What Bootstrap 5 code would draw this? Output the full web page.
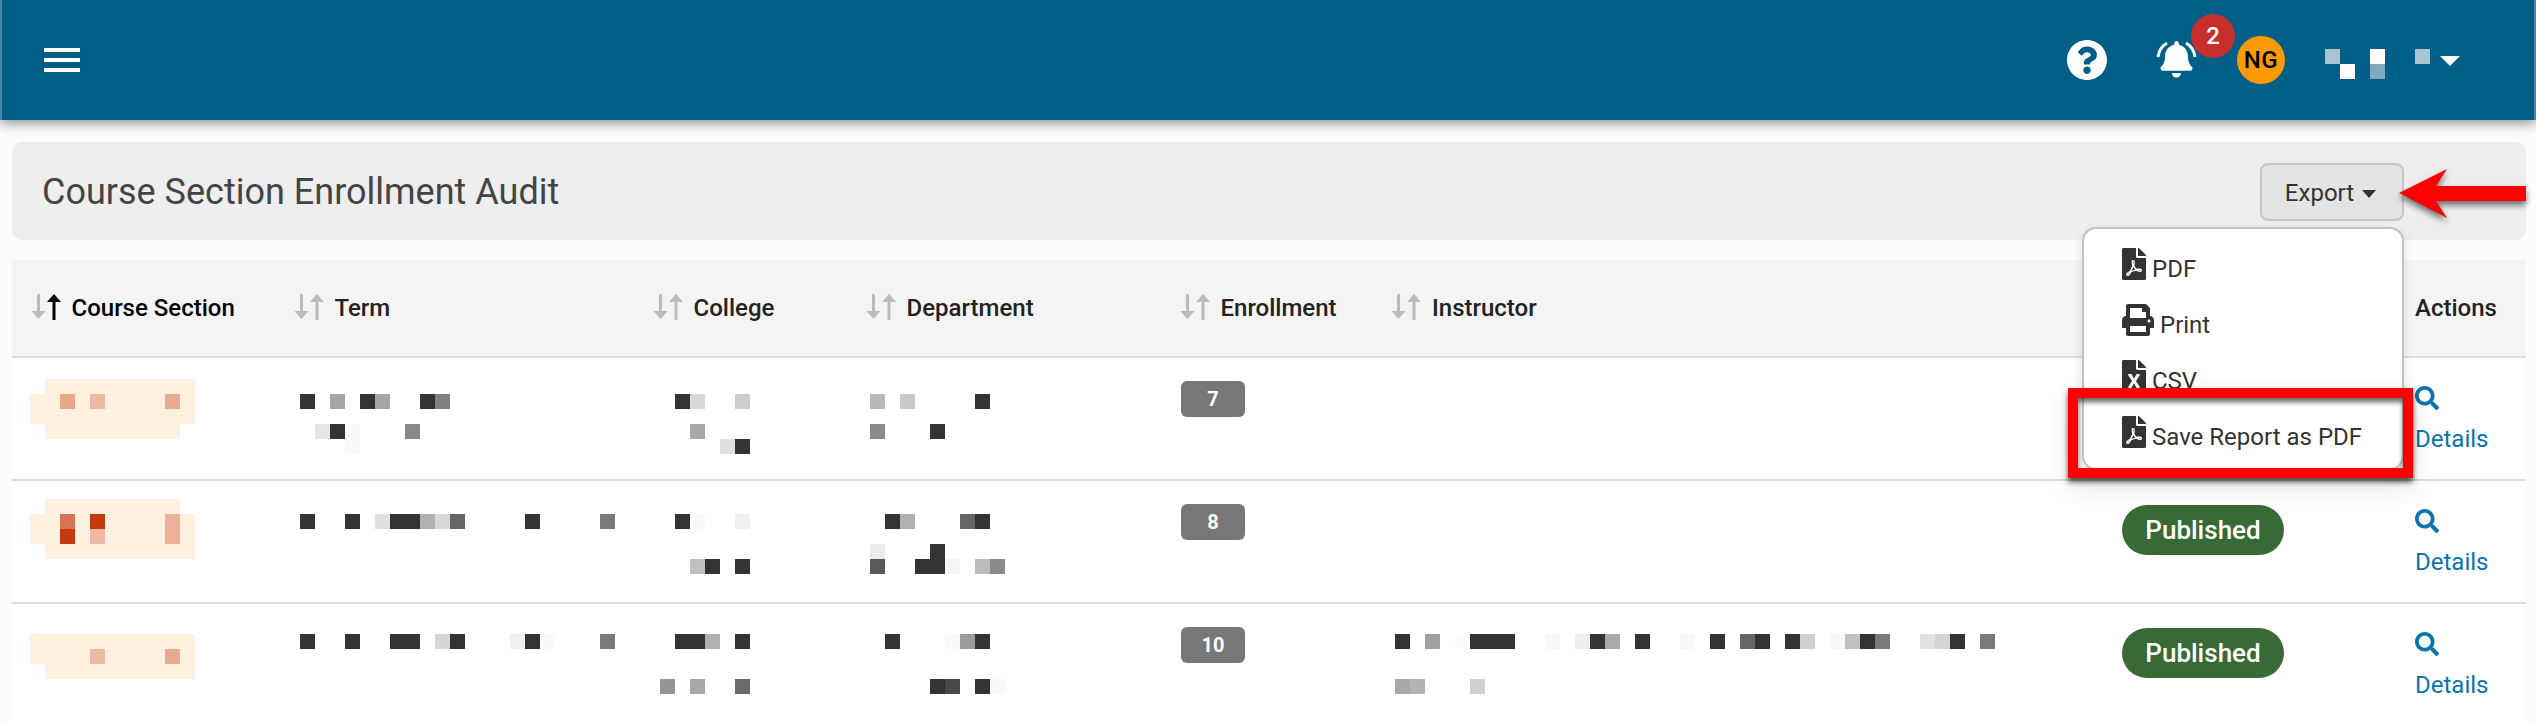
<!DOCTYPE html>
<html lang="en">
<head>
<meta charset="utf-8">
<title>Course Section Enrollment Audit</title>
<link href="https://cdn.jsdelivr.net/npm/bootstrap@5.3.0/dist/css/bootstrap.min.css" rel="stylesheet">
<style>
html,body{height:724px;overflow:hidden}
body{background:#fcfcfc;font-family:Roboto,"Liberation Sans",sans-serif;font-size:24px;color:#333;position:relative}
.topbar{height:120px;background:#005f87;border-left:2px solid #4a89a5;border-right:2px solid #4a89a5;box-shadow:0 3px 12px rgba(0,0,0,.45);padding:0 74px 0 42px}
.burger{width:36px;display:flex;flex-direction:column;gap:6px}
.burger i{display:block;height:4px;background:#fff}
.ic-help{width:40px;height:40px;fill:#fff;margin-left:auto}
.bellbox{position:relative;width:41px;height:40px;margin-left:49px}
.bellbox svg{display:block}
.notif{position:absolute;left:35px;top:-26px;width:44px;height:44px;border-radius:50%;background:#c62f2b;color:#fff;font-weight:500;font-size:24px;line-height:44px;text-align:center}
.avatar{width:48px;height:48px;border-radius:50%;background:#fb9a05;color:#000;font-size:24px;font-weight:500;letter-spacing:.5px;line-height:48px;text-align:center;margin-left:40px}
.usermos{margin-left:40px;margin-top:8px;display:block}
.usercaret{width:0;height:0;border-left:10px solid transparent;border-right:10px solid transparent;border-top:10px solid #fff;margin-left:10px;margin-top:2px}
.wrap{padding:22px 10px 0 12px}
.titlebar{height:98px;background:#eee;border-radius:10px;padding:0 122px 0 30px;margin-bottom:20px}
.titlebar h1{font-size:36px;font-weight:400;color:#444;margin:3px 0 0}
.exportbtn{height:58px;width:144px;padding:2px 3px 0 0;background:#e4e4e4;border:2px solid #c4c4c4;border-radius:8px;color:#333;font-size:24px;margin-top:2px}
.exportbtn:hover,.exportbtn:focus{background:#e4e4e4;border-color:#c4c4c4;color:#333}
.exportbtn::after{border-top-width:8px;border-left-width:7.5px;border-right-width:7.5px;margin-left:8px;vertical-align:3px}
.exportmenu{top:66px;right:0;width:322px;padding:7px 0 8px;border:2px solid #c2c2c2;border-radius:14px;box-shadow:0 4px 10px rgba(0,0,0,.12);font-size:24px}
.exportitem{height:56px;padding:0 0 0 38px;color:#333;gap:6px}
.exportitem svg{fill:#333;height:32px}
.exportitem span{margin-top:9px}
.audit{table-layout:fixed;width:2514px;margin:0;background:#fff;--bs-table-bg:transparent;font-size:24px}
.audit th{height:97px;padding:30px 0 0;background:#f4f4f4;border-bottom:2px solid #ddd;font-weight:500;color:#222;vertical-align:top}
.audit th.now{color:#000}
.audit td{height:123px;padding:0 0 0 18px;border-bottom:2px solid #ddd;vertical-align:top}
.audit tr.last td{height:121px;border-bottom:0}
.r1 .mcell{padding-top:21px}
.r2 .mcell{padding-top:18px}
.r3 .mcell{padding-top:15px}
.mcell svg{display:block}
.audit td.bcell{padding-top:23px}
.audit td.pcell{padding-top:24px;padding-left:19px}
.audit td.acell{padding-top:28px}
.th-a{padding-left:18.5px!important}.th-b{padding-left:11.5px!important}.th-c{padding-left:10.5px!important}
.th-d{padding-left:13.5px!important}.th-e{padding-left:16.5px!important}.th-f{padding-left:14px!important}.th-h{padding-left:18px!important}
.sort{margin-right:11px;margin-top:-3px;flex:none;fill:#bbb}
.sort .on{fill:#000}
.count{display:block;width:64px;height:36px;padding:0;background:#777;border-radius:6px;color:#fff;font-size:20px;font-weight:700;line-height:36px}
.pubpill{display:block;width:162px;height:50px;padding:0;background:#386a37;border-radius:25px;color:#fff;font-size:26px;font-weight:500;line-height:50px}
.detail{color:#0a75ad;text-decoration:none;display:block}
.detail svg{display:block;width:24px;height:24px;fill:#0a75ad}
.detail span{display:block;margin-top:13px;line-height:32px}
.redframe{position:absolute;left:2068px;top:388px;width:345px;height:90px;border:10px solid #f00;box-shadow:0 4px 5px rgba(0,0,0,.65),0 8px 24px rgba(0,0,0,.12),inset 0 4px 5px rgba(0,0,0,.6);z-index:1050}
.redarrow{position:absolute;left:2395px;top:165px;z-index:1050;filter:drop-shadow(0 4px 3px rgba(0,0,0,.55))}
</style>
</head>
<body>
<nav class="topbar d-flex align-items-center">
  <div class="burger"><i></i><i></i><i></i></div>
  <svg class="ic-help" viewBox="8 8 496 496"><path d="M504 256c0 136.997-111.043 248-248 248S8 392.997 8 256C8 119.083 119.043 8 256 8s248 111.083 248 248zM262.655 90c-54.497 0-89.255 22.957-116.549 63.758-3.536 5.286-2.353 12.415 2.715 16.258l34.699 26.31c5.205 3.947 12.621 3.008 16.665-2.122 17.864-22.658 30.113-35.797 57.303-35.797 20.429 0 45.698 13.148 45.698 32.958 0 14.976-12.363 22.667-32.534 33.976C247.128 238.528 216 254.941 216 296v4c0 6.627 5.373 12 12 12h56c6.627 0 12-5.373 12-12v-1.333c0-28.462 83.186-29.647 83.186-106.667 0-58.002-60.165-102-116.531-102zM256 338c-25.365 0-46 20.635-46 46 0 25.364 20.635 46 46 46s46-20.636 46-46c0-25.365-20.635-46-46-46z"/></svg>
  <div class="bellbox">
    <svg width="41" height="40" viewBox="0 0 41 40"><g transform="translate(4.5 1) scale(.0714)" fill="#fff"><path d="M224 512c35.32 0 63.97-28.65 63.97-64H160.03c0 35.35 28.65 64 63.97 64zm215.39-149.71c-19.32-20.76-55.47-51.99-55.47-154.29 0-77.7-54.48-139.9-127.94-155.16V32c0-17.67-14.32-32-31.98-32s-31.98 14.33-31.98 32v20.84C118.56 68.1 64.08 130.3 64.08 208c0 102.3-36.15 133.53-55.47 154.29-6 6.45-8.66 14.16-8.61 21.71.11 16.4 12.98 32 32.1 32h383.8c19.12 0 32-15.6 32.1-32 .05-7.55-2.61-15.27-8.61-21.71z"/></g><path d="M2 17Q3 8 11 3M39 17Q38 8 30 3" fill="none" stroke="#fff" stroke-width="3"/></svg>
    <span class="notif">2</span>
  </div>
  <div class="avatar">NG</div>
  <svg class="usermos" width="105" height="30" viewBox="0 0 7 2" shape-rendering="crispEdges"><rect width="1" height="1" fill="#a8c3d2"/><rect x="1" y="1" width="1" height="1" fill="#fff"/><rect x="3" width="1" height="1" fill="#fff"/><rect x="3" y="1" width="1" height="1" fill="#80a9c0"/><rect x="6" width="1" height="1" fill="#a8c3d2"/></svg>
  <div class="usercaret"></div>
</nav>

<div class="wrap">
  <div class="titlebar d-flex justify-content-between align-items-center">
    <h1>Course Section Enrollment Audit</h1>
    <div class="dropdown">
      <button class="btn dropdown-toggle exportbtn" type="button">Export</button>
      <div class="dropdown-menu show exportmenu">
        <a class="dropdown-item exportitem d-flex align-items-center" href="#"><svg viewBox="0 0 384 512" width="24"><path d="M181.9 256.1c-5-16-4.9-46.9-2-46.9 8.4 0 7.6 36.9 2 46.9zm-1.7 47.2c-7.7 20.2-17.3 43.3-28.4 62.7 18.3-7 39-17.2 62.9-21.9-12.7-9.6-24.9-23.4-34.5-40.8zM86.1 428.1c0 .8 13.2-5.4 34.9-40.2-6.7 6.3-29.1 24.5-34.9 40.2zM248 160h136v328c0 13.3-10.7 24-24 24H24c-13.3 0-24-10.7-24-24V24C0 10.7 10.7 0 24 0h200v136c0 13.2 10.8 24 24 24zm-8 171.8c-20-12.2-33.3-29-42.7-53.8 4.5-18.5 11.6-46.6 6.2-64.2-4.7-29.4-42.4-26.5-47.8-6.8-5 18.3-.4 44.1 8.1 77-11.6 27.6-28.7 64.6-40.8 85.8-.1 0-.1.1-.2.1-27.1 13.9-73.6 44.5-54.5 68 5.6 6.9 16 10 21.5 10 17.9 0 35.7-18 61.1-61.8 25.8-8.5 54.1-19.1 79-23.2 21.7 11.8 47.1 19.5 64 19.5 29.2 0 31.2-32 19.7-43.4-13.9-13.6-54.3-9.7-73.6-7.2zM377 105L279 7c-4.5-4.5-10.6-7-17-7h-6v128h128v-6.1c0-6.3-2.5-12.4-7-16.9zm-74.1 255.3c4.1-2.7-2.5-11.9-42.8-9 37.1 15.8 42.8 9 42.8 9z"/></svg><span>PDF</span></a>
        <a class="dropdown-item exportitem d-flex align-items-center" href="#"><svg viewBox="0 0 512 512" width="32"><path d="M448 192V77.25c0-8.49-3.37-16.62-9.37-22.63L393.37 9.37c-6-6-14.14-9.37-22.63-9.37H96C78.33 0 64 14.33 64 32v160c-35.35 0-64 28.65-64 64v112c0 8.84 7.16 16 16 16h48v96c0 17.67 14.33 32 32 32h320c17.67 0 32-14.33 32-32v-96h48c8.84 0 16-7.16 16-16V256c0-35.35-28.65-64-64-64zm-64 256H128v-96h256v96zm0-224H128V64h192v48c0 8.84 7.16 16 16 16h48v96zm48 72c-13.25 0-24-10.75-24-24 0-13.26 10.75-24 24-24s24 10.74 24 24c0 13.25-10.75 24-24 24z"/></svg><span>Print</span></a>
        <a class="dropdown-item exportitem d-flex align-items-center" href="#"><svg viewBox="0 0 384 512" width="24"><path d="M224 136V0H24C10.7 0 0 10.7 0 24v464c0 13.3 10.7 24 24 24h336c13.3 0 24-10.7 24-24V160H248c-13.2 0-24-10.8-24-24zm60.1 106.5L224 336l60.1 93.5c5.1 8-.6 18.5-10.1 18.5h-34.9c-4.4 0-8.5-2.4-10.6-6.3C208.9 405.5 192 373 192 373c-6.4 14.8-10 20-36.6 68.8-2.1 3.9-6.1 6.3-10.5 6.3H110c-9.5 0-15.2-10.5-10.1-18.5l60.3-93.5-60.3-93.5c-5.2-8 .6-18.5 10.1-18.5h34.8c4.4 0 8.5 2.4 10.6 6.3 26.1 48.8 20 33.6 36.6 68.5 0 0 6.1-11.7 36.6-68.5 2.1-3.9 6.2-6.3 10.6-6.3H274c9.5-.1 15.2 10.4 10.1 18.4zM384 121.9v6.1H256V0h6.1c6.4 0 12.5 2.5 17 7l97.9 98c4.5 4.5 7 10.6 7 16.9z"/></svg><span>CSV</span></a>
        <a class="dropdown-item exportitem d-flex align-items-center" href="#"><svg viewBox="0 0 384 512" width="24"><path d="M181.9 256.1c-5-16-4.9-46.9-2-46.9 8.4 0 7.6 36.9 2 46.9zm-1.7 47.2c-7.7 20.2-17.3 43.3-28.4 62.7 18.3-7 39-17.2 62.9-21.9-12.7-9.6-24.9-23.4-34.5-40.8zM86.1 428.1c0 .8 13.2-5.4 34.9-40.2-6.7 6.3-29.1 24.5-34.9 40.2zM248 160h136v328c0 13.3-10.7 24-24 24H24c-13.3 0-24-10.7-24-24V24C0 10.7 10.7 0 24 0h200v136c0 13.2 10.8 24 24 24zm-8 171.8c-20-12.2-33.3-29-42.7-53.8 4.5-18.5 11.6-46.6 6.2-64.2-4.7-29.4-42.4-26.5-47.8-6.8-5 18.3-.4 44.1 8.1 77-11.6 27.6-28.7 64.6-40.8 85.8-.1 0-.1.1-.2.1-27.1 13.9-73.6 44.5-54.5 68 5.6 6.9 16 10 21.5 10 17.9 0 35.7-18 61.1-61.8 25.8-8.5 54.1-19.1 79-23.2 21.7 11.8 47.1 19.5 64 19.5 29.2 0 31.2-32 19.7-43.4-13.9-13.6-54.3-9.7-73.6-7.2zM377 105L279 7c-4.5-4.5-10.6-7-17-7h-6v128h128v-6.1c0-6.3-2.5-12.4-7-16.9zm-74.1 255.3c4.1-2.7-2.5-11.9-42.8-9 37.1 15.8 42.8 9 42.8 9z"/></svg><span>Save Report as PDF</span></a>
      </div>
    </div>
  </div>

  <svg width="0" height="0" class="position-absolute"><defs>
    <g id="sortdn"><rect x="6" y="0" width="3" height="18"/><polygon points="0.5,17 14.5,17 7.5,25"/></g>
    <g id="sortup"><rect x="21.5" y="7" width="3" height="19"/><polygon points="16,8 30,8 23,0"/></g>
    <g id="lens"><path d="M505 442.7L405.3 343c-4.5-4.5-10.6-7-17-7H372c27.6-35.3 44-79.7 44-128C416 93.1 322.9 0 208 0S0 93.1 0 208s93.1 208 208 208c48.3 0 92.7-16.4 128-44v16.3c0 6.4 2.5 12.5 7 17l99.7 99.7c9.4 9.4 24.6 9.4 33.9 0l28.3-28.3c9.4-9.4 9.4-24.6.1-34zM208 336c-70.7 0-128-57.2-128-128 0-70.7 57.2-128 128-128 70.7 0 128 57.2 128 128 0 70.7-57.2 128-128 128z"/></g>
  </defs></svg>

  <table class="table audit">
    <colgroup><col style="width:270px"><col style="width:360px"><col style="width:210px"><col style="width:311px"><col style="width:214px"><col style="width:726px"><col style="width:294px"><col style="width:129px"></colgroup>
    <thead><tr>
      <th class="th-a now"><div class="d-flex align-items-center"><svg class="sort" width="30" height="26"><use href="#sortdn"/><use href="#sortup" class="on"/></svg>Course Section</div></th>
      <th class="th-b"><div class="d-flex align-items-center"><svg class="sort" width="30" height="26"><use href="#sortdn"/><use href="#sortup"/></svg>Term</div></th>
      <th class="th-c"><div class="d-flex align-items-center"><svg class="sort" width="30" height="26"><use href="#sortdn"/><use href="#sortup"/></svg>College</div></th>
      <th class="th-d"><div class="d-flex align-items-center"><svg class="sort" width="30" height="26"><use href="#sortdn"/><use href="#sortup"/></svg>Department</div></th>
      <th class="th-e"><div class="d-flex align-items-center"><svg class="sort" width="30" height="26"><use href="#sortdn"/><use href="#sortup"/></svg>Enrollment</div></th>
      <th class="th-f"><div class="d-flex align-items-center"><svg class="sort" width="30" height="26"><use href="#sortdn"/><use href="#sortup"/></svg>Instructor</div></th>
      <th></th>
      <th class="th-h">Actions</th>
    </tr></thead>
    <tbody>
      <tr class="r1">
        <td class="mcell"><svg width="165" height="75" viewBox="0 0 11 5" shape-rendering="crispEdges"><path d="M1 0h10v1H1zM0 1h11v2H0zM1 3h9v1H1z" fill="#fff1df"/><rect x="2" y="1" width="1" height="1" fill="#e8a88c"/><rect x="4" y="1" width="1" height="1" fill="#eeb9a2"/><rect x="9" y="1" width="1" height="1" fill="#e9ab90"/></svg></td>
        <td class="mcell"><svg width="330" height="75" viewBox="0 0 22 5" shape-rendering="crispEdges"><g fill="#333"><rect y="1" width="1" height="1"/><rect x="4" y="1" width="1" height="1"/><rect x="8" y="1" width="1" height="1"/><rect x="2" y="3" width="1" height="1"/></g><rect x="2" y="1" width="1" height="1" fill="#a6a6a6"/><rect x="5" y="1" width="1" height="1" fill="#a6a6a6"/><rect x="9" y="1" width="1" height="1" fill="#808080"/><rect x="1" y="3" width="1" height="1" fill="#e6e6e6"/><rect x="3" y="3" width="1" height="2" fill="#fafafa"/><rect x="7" y="3" width="1" height="1" fill="#888"/></svg></td>
        <td class="mcell"><svg width="165" height="75" viewBox="-1 0 11 5" shape-rendering="crispEdges"><rect y="1" width="1" height="1" fill="#333"/><rect x="1" y="1" width="1" height="1" fill="#d8d8d8"/><rect x="4" y="1" width="1" height="1" fill="#ccc"/><rect x="1" y="3" width="1" height="1" fill="#a8a8a8"/><rect x="3" y="4" width="1" height="1" fill="#e0e0e0"/><rect x="4" y="4" width="1" height="1" fill="#333"/></svg></td>
        <td class="mcell"><svg width="150" height="75" viewBox="0 0 10 5" shape-rendering="crispEdges"><rect y="1" width="1" height="1" fill="#b8b8b8"/><rect x="2" y="1" width="1" height="1" fill="#c8c8c8"/><rect x="7" y="1" width="1" height="1" fill="#333"/><rect y="3" width="1" height="1" fill="#8a8a8a"/><rect x="4" y="3" width="1" height="1" fill="#333"/></svg></td>
        <td class="bcell"><span class="badge count">7</span></td>
        <td></td>
        <td class="pcell"><span class="badge pubpill">Published</span></td>
        <td class="acell"><a class="detail" href="#"><svg viewBox="0 0 512 512"><use href="#lens"/></svg><span>Details</span></a></td>
      </tr>
      <tr class="r2">
        <td class="mcell"><svg width="165" height="75" viewBox="0 0 11 5" shape-rendering="crispEdges"><path d="M1 0h9v1H1zM0 1h11v2H0zM1 3h10v1H1z" fill="#fff1df"/><rect x="2" y="1" width="1" height="1" fill="#d67455"/><rect x="2" y="2" width="1" height="1" fill="#c23a0e"/><rect x="4" y="1" width="1" height="1" fill="#c23a0e"/><rect x="4" y="2" width="1" height="1" fill="#eeb9a2"/><rect x="9" y="1" width="1" height="2" fill="#edb199"/></svg></td>
        <td class="mcell"><svg width="330" height="75" viewBox="0 0 22 5" shape-rendering="crispEdges"><g fill="#333"><rect y="1" width="1" height="1"/><rect x="3" y="1" width="1" height="1"/><rect x="6" y="1" width="2" height="1"/><rect x="15" y="1" width="1" height="1"/></g><rect x="5" y="1" width="1" height="1" fill="#e0e0e0"/><rect x="8" y="1" width="1" height="1" fill="#b0b0b0"/><rect x="9" y="1" width="1" height="1" fill="#d8d8d8"/><rect x="10" y="1" width="1" height="1" fill="#666"/><rect x="20" y="1" width="1" height="1" fill="#7a7a7a"/></svg></td>
        <td class="mcell"><svg width="165" height="75" viewBox="-1 0 11 5" shape-rendering="crispEdges"><rect y="1" width="1" height="1" fill="#333"/><rect x="1" y="1" width="1" height="1" fill="#fafafa"/><rect x="4" y="1" width="1" height="1" fill="#f0f0f0"/><rect x="1" y="4" width="1" height="1" fill="#c0c0c0"/><rect x="2" y="4" width="1" height="1" fill="#333"/><rect x="4" y="4" width="1" height="1" fill="#333"/></svg></td>
        <td class="mcell"><svg width="150" height="75" viewBox="0 0 10 5" shape-rendering="crispEdges"><rect x="1" y="1" width="1" height="1" fill="#333"/><rect x="2" y="1" width="1" height="1" fill="#b0b0b0"/><rect x="6" y="1" width="1" height="1" fill="#666"/><rect x="7" y="1" width="1" height="1" fill="#333"/><rect y="3" width="1" height="1" fill="#ececec"/><rect x="4" y="3" width="1" height="2" fill="#333"/><rect y="4" width="1" height="1" fill="#5a5a5a"/><rect x="3" y="4" width="1" height="1" fill="#333"/><rect x="5" y="4" width="1" height="1" fill="#f5f5f5"/><rect x="7" y="4" width="1" height="1" fill="#bbb"/><rect x="8" y="4" width="1" height="1" fill="#8a8a8a"/></svg></td>
        <td class="bcell"><span class="badge count">8</span></td>
        <td></td>
        <td class="pcell"><span class="badge pubpill">Published</span></td>
        <td class="acell"><a class="detail" href="#"><svg viewBox="0 0 512 512"><use href="#lens"/></svg><span>Details</span></a></td>
      </tr>
      <tr class="r3 last">
        <td class="mcell"><svg width="165" height="75" viewBox="0 0 11 5" shape-rendering="crispEdges"><path d="M0 1h11v2H0zM1 3h10v1H1z" fill="#fff1df"/><rect x="4" y="2" width="1" height="1" fill="#eeb9a2"/><rect x="9" y="2" width="1" height="1" fill="#e9ab90"/></svg></td>
        <td class="mcell"><svg width="330" height="75" viewBox="0 0 22 5" shape-rendering="crispEdges"><g fill="#333"><rect y="1" width="1" height="1"/><rect x="3" y="1" width="1" height="1"/><rect x="6" y="1" width="2" height="1"/><rect x="10" y="1" width="1" height="1"/><rect x="15" y="1" width="1" height="1"/></g><rect x="9" y="1" width="1" height="1" fill="#d6d6d6"/><rect x="14" y="1" width="1" height="1" fill="#f0f0f0"/><rect x="16" y="1" width="1" height="1" fill="#fafafa"/><rect x="20" y="1" width="1" height="1" fill="#7a7a7a"/></svg></td>
        <td class="mcell"><svg width="165" height="75" viewBox="-1 0 11 5" shape-rendering="crispEdges"><rect y="1" width="2" height="1" fill="#333"/><rect x="2" y="1" width="1" height="1" fill="#b0b0b0"/><rect x="4" y="1" width="1" height="1" fill="#333"/><rect x="-1" y="4" width="1" height="1" fill="#949494"/><rect x="1" y="4" width="1" height="1" fill="#a8a8a8"/><rect x="4" y="4" width="1" height="1" fill="#6a6a6a"/></svg></td>
        <td class="mcell"><svg width="150" height="75" viewBox="0 0 10 5" shape-rendering="crispEdges"><rect x="1" y="1" width="1" height="1" fill="#333"/><rect x="5" y="1" width="1" height="1" fill="#fafafa"/><rect x="6" y="1" width="1" height="1" fill="#9c9c9c"/><rect x="7" y="1" width="1" height="1" fill="#333"/><rect x="4" y="4" width="1" height="1" fill="#333"/><rect x="5" y="4" width="1" height="1" fill="#484848"/><rect x="7" y="4" width="1" height="1" fill="#333"/><rect x="8" y="4" width="1" height="1" fill="#fafafa"/></svg></td>
        <td class="bcell"><span class="badge count">10</span></td>
        <td class="mcell"><svg width="600" height="75" viewBox="0 0 40 5" shape-rendering="crispEdges"><g fill="#333"><rect y="1" width="1" height="1"/><rect x="5" y="1" width="3" height="1"/><rect x="13" y="1" width="1" height="1"/><rect x="16" y="1" width="1" height="1"/><rect x="21" y="1" width="1" height="1"/><rect x="24" y="1" width="1" height="1"/><rect x="26" y="1" width="1" height="1"/><rect x="31" y="1" width="1" height="1"/><rect x="37" y="1" width="1" height="1"/></g><rect x="2" y="1" width="1" height="1" fill="#a0a0a0"/><rect x="4" y="1" width="1" height="1" fill="#fcfcfc"/><rect x="10" y="1" width="1" height="1" fill="#f8f8f8"/><rect x="12" y="1" width="1" height="1" fill="#eee"/><rect x="14" y="1" width="1" height="1" fill="#aaa"/><rect x="19" y="1" width="1" height="1" fill="#f8f8f8"/><rect x="23" y="1" width="1" height="1" fill="#666"/><rect x="27" y="1" width="1" height="1" fill="#d0d0d0"/><rect x="29" y="1" width="1" height="1" fill="#f8f8f8"/><rect x="30" y="1" width="1" height="1" fill="#c0c0c0"/><rect x="32" y="1" width="1" height="1" fill="#7a7a7a"/><rect x="35" y="1" width="1" height="1" fill="#e2e2e2"/><rect x="36" y="1" width="1" height="1" fill="#d4d4d4"/><rect x="39" y="1" width="1" height="1" fill="#7a7a7a"/><rect y="4" width="1" height="1" fill="#a8a8a8"/><rect x="1" y="4" width="1" height="1" fill="#b4b4b4"/><rect x="5" y="4" width="1" height="1" fill="#d0d0d0"/></svg></td>
        <td class="pcell"><span class="badge pubpill">Published</span></td>
        <td class="acell"><a class="detail" href="#"><svg viewBox="0 0 512 512"><use href="#lens"/></svg><span>Details</span></a></td>
      </tr>
    </tbody>
  </table>
</div>

<div class="redframe"></div>
<svg class="redarrow" width="131" height="60" viewBox="0 0 131 60"><polygon points="4,28 52,4 41,21 131,21 131,36 41,36 52,53" fill="#f00"/></svg>
<script src="https://cdn.jsdelivr.net/npm/bootstrap@5.3.0/dist/js/bootstrap.bundle.min.js"></script>
</body>
</html>
